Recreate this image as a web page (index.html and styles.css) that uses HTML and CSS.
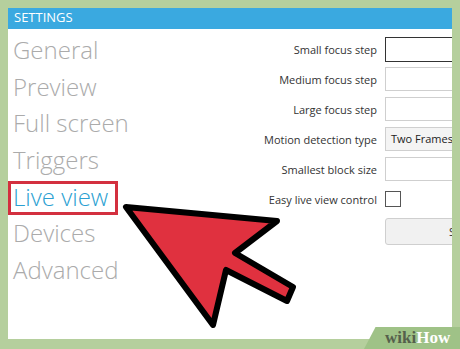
FILE: index.html
```html
<!DOCTYPE html>
<html lang="en">
<head>
  <meta charset="UTF-8">
  <title>Settings - Live view</title>
  <link rel="stylesheet" href="styles.css">
</head>
<body>
  <div class="panel">
    <div class="panel-header">SETTINGS</div>
    <div class="panel-body">
      <ul class="nav">
        <li>General</li>
        <li>Preview</li>
        <li>Full screen</li>
        <li>Triggers</li>
        <li class="active"><span class="highlight">Live view</span></li>
        <li>Devices</li>
        <li>Advanced</li>
      </ul>
      <div class="form">
        <label>Small focus step</label>
        <div class="field focused"></div>
        <label>Medium focus step</label>
        <div class="field"></div>
        <label>Large focus step</label>
        <div class="field"></div>
        <label>Motion detection type</label>
        <div class="field combo">Two Frames</div>
        <label>Smallest block size</label>
        <div class="field"></div>
        <label>Easy live view control</label>
        <div class="check-cell"><div class="checkbox"></div></div>
        <span></span>
        <div class="button">Save</div>
      </div>
    </div>
  </div>

  <!-- big pointer over the page -->
  <svg class="arrow" width="460" height="349" viewBox="0 0 460 349">
    <polygon points="126,207 277,221 235,253 293,287 287,301 226,270 213,325"
             fill="#e0313f" stroke="#000" stroke-width="6" stroke-linejoin="round"/>
  </svg>

  <div class="watermark"><span class="wiki">wiki</span><span class="how">How</span></div>
</body>
</html>
```

FILE: styles.css
```css
/* Page */
body {
  margin: 0;
  width: 460px;
  height: 349px;
  padding: 8px 8px 10px 8px;
  box-sizing: border-box;
  background: #b5cf9d;
  font-family: "Open Sans", "Noto Sans", sans-serif;
  overflow: hidden;
  position: relative;
}

/* Settings window */
.panel {
  background: #fff;
  height: 331px;
  overflow: hidden;
  display: flex;
  flex-direction: column;
}

.panel-header {
  background: #3aa9e0;
  color: #fff;
  font-size: 13px;
  height: 21px;
  line-height: 19px;
  padding-left: 6px;
  flex-shrink: 0;
}

.panel-body {
  display: flex;
  flex: 1;
}

/* Left navigation */
.nav {
  list-style: none;
  margin: 0;
  padding: 3px 0 0 5px;
  width: 150px;
  flex-shrink: 0;
}

.nav li {
  font-size: 24px;
  font-weight: 300;
  color: #ababab;
  height: 36.7px;
  line-height: 36px;
  white-space: nowrap;
}

.nav li.active {
  color: #2b9fd2;
}

.highlight {
  display: inline-block;
  border: 3px solid #d3303f;
  margin: 0 0 0 -5px;
  padding: 0 7px 0 2px;
  height: 28px;
  line-height: 26px;
}

/* Right form */
.form {
  flex: 1;
  display: grid;
  grid-template-columns: 1fr 100px;
  grid-auto-rows: 24px;
  row-gap: 6px;
  column-gap: 8px;
  align-items: center;
  padding-top: 8px;
  margin-right: -33px;
}

.form label {
  font-size: 11px;
  color: #333;
  text-align: right;
  white-space: nowrap;
}

.field {
  height: 24px;
  box-sizing: border-box;
  border: 1px solid #cfcfcf;
  background: #fff;
}

.field.focused {
  border-color: #333;
  height: 25px;
}

.combo {
  background: #f4f4f4;
  font-size: 11px;
  color: #222;
  line-height: 22px;
  padding-left: 5px;
  white-space: nowrap;
}

.check-cell {
  display: flex;
  align-items: center;
}

.checkbox {
  width: 16px;
  height: 16px;
  box-sizing: border-box;
  border: 1px solid #555;
}

.button {
  height: 27px;
  margin-top: 4px;
  box-sizing: border-box;
  border: 1px solid #cfcfcf;
  border-radius: 3px;
  background: #f1f1f1;
  font-size: 11px;
  color: #333;
  line-height: 25px;
  padding-left: 63px;
}

/* Overlays */
.arrow {
  position: absolute;
  left: 0;
  top: 0;
}

.watermark {
  position: absolute;
  right: 0;
  bottom: 0;
  width: 75px;
  height: 22px;
  padding-left: 21px;
  background: #9fc287;
  clip-path: polygon(12% 0, 100% 0, 100% 100%, 0 100%);
  font-family: "Liberation Serif", serif;
  font-weight: bold;
  font-size: 17px;
  line-height: 22px;
}

.wiki {
  color: #55604c;
}

.how {
  color: #fff;
}
```
